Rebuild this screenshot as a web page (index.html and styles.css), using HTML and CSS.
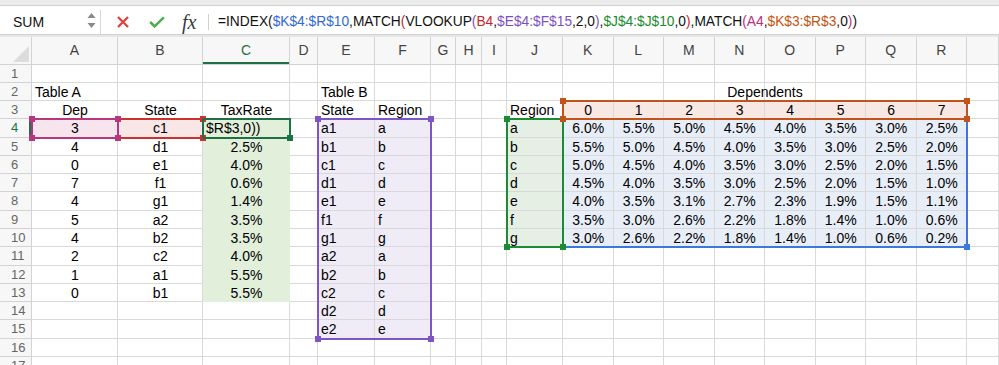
FILE: index.html
```html
<!DOCTYPE html>
<html>
<head>
<meta charset="utf-8">
<link rel="stylesheet" href="styles.css">
</head>
<body>
<div class="topstrip"></div>
<div class="fbar">
  <div class="namebox">
    <span class="nbtext">SUM</span>
    <svg class="spin" width="9" height="20" viewBox="0 0 9 20"><polygon points="0.5,6 8.5,6 4.5,1"/><polygon points="0.5,11 8.5,11 4.5,16"/></svg>
  </div>
  <svg class="ico-x" width="14" height="14" viewBox="0 0 14 14"><path d="M2 2 L12 12 M12 2 L2 12"/></svg>
  <svg class="ico-ok" width="16" height="12" viewBox="0 0 16 12"><polyline points="1.2,6 5.6,10.4 14.8,1.4"/></svg>
  <span class="fx">fx</span>
  <span class="sep"></span>
  <div class="ftext">=INDEX(<span class="kb">$K$4:$R$10</span>,MATCH<span class="kr">(</span>VLOOKUP<span class="kp">(</span><span class="kr">B4</span>,<span class="kp">$E$4:$F$15</span>,2,0<span class="kp">)</span>,<span class="kg">$J$4:$J$10</span>,0<span class="kr">)</span>,MATCH<span class="km">(</span><span class="km">A4</span>,<span class="ko">$K$3:$R$3</span>,0<span class="km">)</span>)</div>
</div>
<div class="gap"></div>
<div class="sheet">
  <div class="colhdr">
    <div class="corner"><svg width="16" height="16" viewBox="0 0 16 16"><polygon points="16,0 16,16 0,16"/></svg></div>
    <div>A</div><div>B</div><div class="act">C</div><div>D</div><div>E</div><div>F</div><div>G</div><div>H</div><div>I</div><div>J</div><div>K</div><div>L</div><div>M</div><div>N</div><div>O</div><div>P</div><div>Q</div><div>R</div><div></div>
  </div>
  <div class="rowhdr">
    <div>1</div><div>2</div><div>3</div><div class="act">4</div><div>5</div><div>6</div><div>7</div><div>8</div><div>9</div><div>10</div><div>11</div><div>12</div><div>13</div><div>14</div><div>15</div><div>16</div><div>17</div>
  </div>

  <div class="fill f-a4"></div>
  <div class="fill f-b4"></div>
  <div class="fill f-e"></div>
  <div class="fill f-j"></div>
  <div class="fill f-k3"></div>
  <div class="fill f-k4"></div>

  <div class="vlines"><i></i><i></i><i></i><i></i><i></i><i></i><i></i><i></i><i></i><i></i><i></i><i></i><i></i><i></i><i></i><i></i><i></i><i></i><i></i></div>
  <div class="hlines"><i></i><i></i><i></i><i></i><i></i><i></i><i></i><i></i><i></i><i></i><i></i><i></i><i></i><i></i><i></i><i></i><i></i></div>

  <div class="cfill"></div>

  <div class="t p-ta">Table A</div>
  <div class="t p-tb">Table B</div>
  <div class="t p-dep">Dependents</div>
  <div class="blk p-ha"><div class="t">Dep</div><div class="t">State</div><div class="t">TaxRate</div></div>
  <div class="blk p-he"><div class="t">State</div><div class="t">Region</div></div>
  <div class="t p-j3">Region</div>

  <div class="blk p-da">
    <div class="t">3</div><div class="t">c1</div><div class="t l">$R$3,0))</div>
    <div class="t">4</div><div class="t">d1</div><div class="t">2.5%</div>
    <div class="t">0</div><div class="t">e1</div><div class="t">4.0%</div>
    <div class="t">7</div><div class="t">f1</div><div class="t">0.6%</div>
    <div class="t">4</div><div class="t">g1</div><div class="t">1.4%</div>
    <div class="t">5</div><div class="t">a2</div><div class="t">3.5%</div>
    <div class="t">4</div><div class="t">b2</div><div class="t">3.5%</div>
    <div class="t">2</div><div class="t">c2</div><div class="t">4.0%</div>
    <div class="t">1</div><div class="t">a1</div><div class="t">5.5%</div>
    <div class="t">0</div><div class="t">b1</div><div class="t">5.5%</div>
  </div>

  <div class="blk p-de">
    <div class="t">a1</div><div class="t">a</div>
    <div class="t">b1</div><div class="t">b</div>
    <div class="t">c1</div><div class="t">c</div>
    <div class="t">d1</div><div class="t">d</div>
    <div class="t">e1</div><div class="t">e</div>
    <div class="t">f1</div><div class="t">f</div>
    <div class="t">g1</div><div class="t">g</div>
    <div class="t">a2</div><div class="t">a</div>
    <div class="t">b2</div><div class="t">b</div>
    <div class="t">c2</div><div class="t">c</div>
    <div class="t">d2</div><div class="t">d</div>
    <div class="t">e2</div><div class="t">e</div>
  </div>

  <div class="blk p-dj">
    <div class="t">a</div><div class="t">b</div><div class="t">c</div><div class="t">d</div><div class="t">e</div><div class="t">f</div><div class="t">g</div>
  </div>

  <div class="blk p-dk">
    <div class="t">0</div><div class="t">1</div><div class="t">2</div><div class="t">3</div><div class="t">4</div><div class="t">5</div><div class="t">6</div><div class="t">7</div>
    <div class="t">6.0%</div><div class="t">5.5%</div><div class="t">5.0%</div><div class="t">4.5%</div><div class="t">4.0%</div><div class="t">3.5%</div><div class="t">3.0%</div><div class="t">2.5%</div>
    <div class="t">5.5%</div><div class="t">5.0%</div><div class="t">4.5%</div><div class="t">4.0%</div><div class="t">3.5%</div><div class="t">3.0%</div><div class="t">2.5%</div><div class="t">2.0%</div>
    <div class="t">5.0%</div><div class="t">4.5%</div><div class="t">4.0%</div><div class="t">3.5%</div><div class="t">3.0%</div><div class="t">2.5%</div><div class="t">2.0%</div><div class="t">1.5%</div>
    <div class="t">4.5%</div><div class="t">4.0%</div><div class="t">3.5%</div><div class="t">3.0%</div><div class="t">2.5%</div><div class="t">2.0%</div><div class="t">1.5%</div><div class="t">1.0%</div>
    <div class="t">4.0%</div><div class="t">3.5%</div><div class="t">3.1%</div><div class="t">2.7%</div><div class="t">2.3%</div><div class="t">1.9%</div><div class="t">1.5%</div><div class="t">1.1%</div>
    <div class="t">3.5%</div><div class="t">3.0%</div><div class="t">2.6%</div><div class="t">2.2%</div><div class="t">1.8%</div><div class="t">1.4%</div><div class="t">1.0%</div><div class="t">0.6%</div>
    <div class="t">3.0%</div><div class="t">2.6%</div><div class="t">2.2%</div><div class="t">1.8%</div><div class="t">1.4%</div><div class="t">1.0%</div><div class="t">0.6%</div><div class="t">0.2%</div>
  </div>

  <div class="rb rb-k4"><span class="h tl"></span><span class="h tr"></span><span class="h bl"></span><span class="h br"></span></div>
  <div class="rb rb-j"><span class="h tl"></span><span class="h tr"></span><span class="h bl"></span><span class="h br"></span></div>
  <div class="rb rb-k3"><span class="h tl"></span><span class="h tr"></span><span class="h bl"></span><span class="h br"></span></div>
  <div class="rb rb-e"><span class="h tl"></span><span class="h tr"></span><span class="h bl"></span><span class="h br"></span></div>
  <div class="rb rb-b"><span class="h tl"></span><span class="h tr"></span><span class="h bl"></span><span class="h br"></span></div>
  <div class="rb rb-a"><span class="h tl"></span><span class="h tr"></span><span class="h bl"></span><span class="h br"></span></div>
  <div class="rb rb-c"><span class="h br"></span></div>
</div>
</body>
</html>
```

FILE: styles.css
```css
* { box-sizing: border-box; margin: 0; padding: 0; }
html, body { width: 999px; height: 365px; overflow: hidden; background: #fff; }
body { font-family: "Liberation Sans", Arial, sans-serif; font-size: 14px; color: #000; }

.topstrip { height: 5px; background: #ebebeb; }

.fbar {
  height: 30px;
  padding-top: 4px;
  display: flex;
  align-items: center;
  background: #fff;
  border-top: 1px solid #d2d2d2;
  border-bottom: 1px solid #d2d2d2;
}
.namebox {
  width: 101px;
  height: 24px;
  display: flex;
  align-items: center;
  justify-content: space-between;
  padding-left: 13px;
  padding-right: 4px;
  border-right: 1px solid #d6d6d6;
}
.nbtext { line-height: 24px; font-size: 14px; color: #111; }
.spin polygon { fill: #8a8a8a; }
.ico-x { margin-left: 15px; }
.ico-x path { stroke: #e0433b; stroke-width: 2.3; fill: none; stroke-linecap: butt; }
.ico-ok { margin-left: 19px; }
.ico-ok polyline { stroke: #4cae4f; stroke-width: 2.5; fill: none; stroke-linejoin: miter; }
.fx {
  margin-left: 17px;
  width: 18px;
  font-family: "Liberation Serif", "Times New Roman", serif;
  font-style: italic;
  font-size: 20px;
  line-height: 24px;
  color: #3a3a3a;
}
.sep { margin-left: 8px; width: 1px; height: 16px; background: #d0d0d0; }
.ftext { margin-left: 9px; line-height: 24px; font-size: 13.75px; color: #111; white-space: nowrap; }
.kb { color: #2f6ad6; }
.kr { color: #c4282c; }
.kp { color: #7e4fc2; }
.kg { color: #1a8a2e; }
.km { color: #b5307d; }
.ko { color: #c2530f; }

.gap { height: 1.5px; background: #e6e6e6; }

.sheet {
  --cols: 32px 86px 85px 87px 28px 57px 56px 25px 26px 25px 56px repeat(8, 50.5px) 1fr;
  display: grid;
  grid-template-columns: var(--cols);
  grid-template-rows: 28px repeat(17, 18.29px);
}

.colhdr {
  grid-column: 1 / -1;
  grid-row: 1;
  display: grid;
  grid-template-columns: var(--cols);
  background: #f7f7f7;
  z-index: 2;
}
.colhdr > div {
  border-right: 1px solid #d3d3d3;
  border-bottom: 1px solid #d3d3d3;
  text-align: center;
  line-height: 27px;
  color: #444;
  font-size: 14px;
}
.colhdr > div.act { color: #1e7145; box-shadow: inset 0 -2px 0 #1e7145; }
.corner { display: flex; align-items: flex-end; justify-content: flex-end; padding: 0 2px 2px 0; }
.corner polygon { fill: #dcdcdc; }

.rowhdr {
  grid-column: 1;
  grid-row: 2 / -1;
  display: grid;
  grid-auto-rows: 18.29px;
  background: #f7f7f7;
  z-index: 2;
}
.rowhdr > div {
  border-right: 1px solid #d3d3d3;
  border-bottom: 1px solid #d3d3d3;
  padding-left: 11px;
  font-size: 13px;
  line-height: 18px;
  color: #666;
}
.rowhdr > div.act { color: #1e7145; box-shadow: inset -2px 0 0 #1e7145; }

.vlines {
  grid-column: 2 / -1;
  grid-row: 2 / -1;
  display: grid;
  grid-template-columns: 86px 85px 87px 28px 57px 56px 25px 26px 25px 56px repeat(8, 50.5px) 1fr;
  z-index: 2;
}
.vlines > i { border-right: 1px solid #d9d9d9; }
.hlines {
  grid-column: 2 / -1;
  grid-row: 2 / -1;
  display: grid;
  grid-auto-rows: 18.29px;
  z-index: 2;
}
.hlines > i { border-bottom: 1px solid #d9d9d9; }

.fill { z-index: 1; }
.f-a4 { grid-area: 5 / 2 / 6 / 3; background: #f7e5ee; }
.f-b4 { grid-area: 5 / 3 / 6 / 4; background: #f9e7e7; }
.f-e  { grid-area: 5 / 6 / 17 / 8; background: #efebf7; }
.f-j  { grid-area: 5 / 11 / 12 / 12; background: #e6efe4; }
.f-k3 { grid-area: 4 / 12 / 5 / 20; background: #f8e8e3; }
.f-k4 { grid-area: 5 / 12 / 12 / 20; background: #e8eef8; }
.cfill { grid-area: 5 / 4 / 15 / 5; background: #e2efda; z-index: 3; }

.t {
  line-height: 18.29px;
  padding: 0 3px;
  white-space: nowrap;
  z-index: 4;
}
.blk { display: grid; grid-auto-rows: 18.29px; z-index: 4; }
.p-ta { grid-area: 3 / 2; }
.p-tb { grid-area: 3 / 6; }
.p-dep { grid-row: 3; grid-column: 12 / 20; text-align: center; }
.p-j3 { grid-area: 4 / 11; }
.p-ha { grid-area: 4 / 2 / 5 / 5; grid-template-columns: 86px 85px 87px; text-align: center; }
.p-he { grid-area: 4 / 6 / 5 / 8; grid-template-columns: 57px 56px; }
.p-da { grid-area: 5 / 2 / 15 / 5; grid-template-columns: 86px 85px 87px; text-align: center; }
.p-da .l { text-align: left; }
.p-de { grid-area: 5 / 6 / 17 / 8; grid-template-columns: 57px 56px; }
.p-dj { grid-area: 5 / 11 / 12 / 12; }
.p-dk { grid-area: 4 / 12 / 12 / 20; grid-template-columns: repeat(8, 50.5px); text-align: center; }

.rb { position: relative; margin: -1px; border: 2px solid; z-index: 5; }
.h { position: absolute; width: 6px; height: 6px; }
.h.tl { left: -4px; top: -4px; }
.h.tr { right: -4px; top: -4px; }
.h.bl { left: -4px; bottom: -4px; }
.h.br { right: -4px; bottom: -4px; }

.rb-k4 { grid-area: 5 / 12 / 12 / 20; border-color: #3b78d9; }
.rb-k4 .h { background: #3b78d9; }
.rb-j { grid-area: 5 / 11 / 12 / 12; border-color: #1d8a36; }
.rb-j .h { background: #1d8a36; }
.rb-k3 { grid-area: 4 / 12 / 5 / 20; border-color: #c0541a; }
.rb-k3 .h { background: #c0541a; }
.rb-e { grid-area: 5 / 6 / 17 / 8; border-color: #7e55c4; }
.rb-e .h { background: #7e55c4; }
.rb-b { grid-area: 5 / 3 / 6 / 4; border-color: #cf3030; }
.rb-b .h { background: #cf3030; }
.rb-a { grid-area: 5 / 2 / 6 / 3; border-color: #b8357f; }
.rb-a .h { background: #b8357f; }
.rb-c { grid-area: 5 / 4 / 6 / 5; border-color: #1e7145; }
.rb-c .h { background: #1e7145; }
```
